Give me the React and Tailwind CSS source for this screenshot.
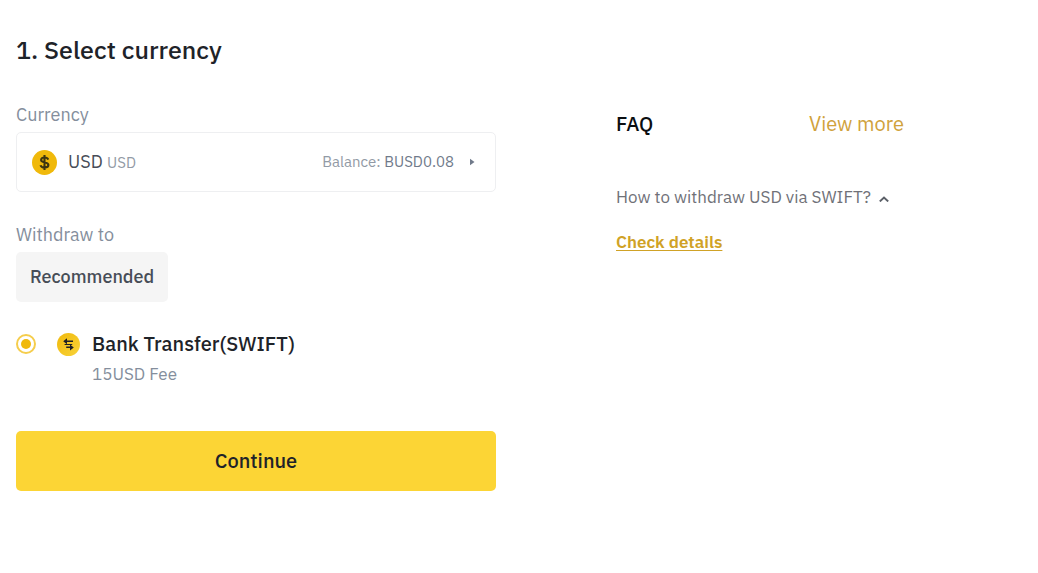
import { useState } from "react";

function DollarIcon() {
  return (
    <svg className="size-[25px] shrink-0" viewBox="0 0 25 25" aria-hidden="true">
      <circle cx="12.5" cy="12.5" r="12.5" fill="#f0b90b" />
      <path
        d="M16.2 9.6C15.7 8.2 14.4 7.5 12.6 7.5C10.5 7.5 9.1 8.4 9.1 9.9C9.1 13.2 16.4 11.4 16.4 15.1C16.4 16.7 14.9 17.6 12.6 17.6C10.5 17.6 9 16.8 8.5 15.2M12.5 5V20"
        fill="none"
        stroke="#3c3511"
        strokeWidth="2.1"
      />
    </svg>
  );
}

function TransferIcon() {
  return (
    <svg className="size-[23px] shrink-0" viewBox="0 0 23 23" aria-hidden="true">
      <defs>
        <linearGradient id="coin" x1="0" y1="0" x2="1" y2="1">
          <stop offset="0" stopColor="#f0b90b" />
          <stop offset="1" stopColor="#f8d33a" />
        </linearGradient>
      </defs>
      <circle cx="11.5" cy="11.5" r="11.5" fill="url(#coin)" />
      <path
        d="M6.2 8.3L10 5.3V7.6H16V9.1H10V11.3ZM16.8 14.4L13 17.4V15.1H9.2V13.6H13V11.4ZM7.6 10.9H15.2V11.9H7.6Z"
        fill="#1e2026"
      />
    </svg>
  );
}

export default function App() {
  const [method, setMethod] = useState("swift");
  return (
    <main className="min-h-screen bg-white px-4 py-8 font-['IBM_Plex_Sans',Roboto,sans-serif] text-[#1e2329]">
      <h1 className="text-[25px] leading-[35px] font-medium">1. Select currency</h1>
      <div className="mt-9 flex flex-wrap gap-x-[120px] gap-y-12">
        <form className="w-full max-w-[480px]" onSubmit={(e) => e.preventDefault()}>
          <p id="currency-label" className="text-lg leading-6 text-[#848e9c]">Currency</p>
          <button
            type="button"
            aria-labelledby="currency-label currency-value"
            className="mt-[5px] flex h-[60px] w-full items-center rounded-[5px] border border-[#eeeff1] pr-5 pl-[15px] text-left"
          >
            <DollarIcon />
            <span id="currency-value" className="ml-[11px] text-lg text-[#474d57]">
              USD <span className="text-[15px] text-[#929aa5]">USD</span>
            </span>
            <span className="ml-auto text-[15px] text-[#929aa5]">
              Balance: <span className="text-[#707a8a]">BUSD0.08</span>
            </span>
            <svg className="ml-4 h-2 w-[5px]" viewBox="0 0 5 8" aria-hidden="true">
              <path d="M0 0.8L4.5 4L0 7.2Z" fill="#707a8a" />
            </svg>
          </button>

          <p className="mt-[31px] text-lg leading-6 text-[#848e9c]">Withdraw to</p>
          <button
            type="button"
            className="mt-[5px] block h-[50px] rounded-[5px] bg-[#f5f5f5] px-3.5 text-lg font-medium text-[#474d57]"
          >
            Recommended
          </button>

          <label className="mt-7 grid grid-cols-[20px_23px_1fr] items-center gap-y-1">
            <input
              type="radio"
              name="method"
              value="swift"
              checked={method === "swift"}
              onChange={(e) => setMethod(e.target.value)}
              className="size-5 appearance-none rounded-full border-2 border-[#f5cd4c] bg-clip-content p-[3px] checked:bg-[#f0b90b]"
            />
            <span className="col-span-2 flex items-center gap-3 pl-[21px]">
              <TransferIcon />
              <span className="text-xl leading-7 font-medium">Bank Transfer(SWIFT)</span>
            </span>
            <span className="col-span-2 col-start-2 pl-14 text-[17px] leading-6 text-[#848e9c]">15USD Fee</span>
          </label>

          <button
            type="submit"
            className="mt-[45px] h-[60px] w-full rounded-[5px] bg-[#fcd535] text-xl font-medium"
          >
            Continue
          </button>
        </form>

        <aside className="w-72 pt-[7px]">
          <div className="flex items-center justify-between leading-7">
            <h2 className="text-xl leading-7 font-medium text-[#0b0e11]">FAQ</h2>
            <a href="#faq" className="text-xl leading-7 text-[#d0a23c]">View more</a>
          </div>
          <button type="button" aria-expanded="true" className="mt-[47px] flex items-center gap-2 text-[17px] leading-6 text-[#707178]">
            How to withdraw USD via SWIFT?
            <svg className="mt-1 h-1.5 w-[10px]" viewBox="0 0 10 6" aria-hidden="true">
              <path d="M0.8 5.4L5 1.6L9.2 5.4" fill="none" stroke="#5b6068" strokeWidth="2" />
            </svg>
          </button>
          <a href="#details" className="mt-[21px] inline-block text-[17px] leading-6 font-semibold text-[#d0a226] underline underline-offset-2">
            Check details
          </a>
        </aside>
      </div>
    </main>
  );
}
